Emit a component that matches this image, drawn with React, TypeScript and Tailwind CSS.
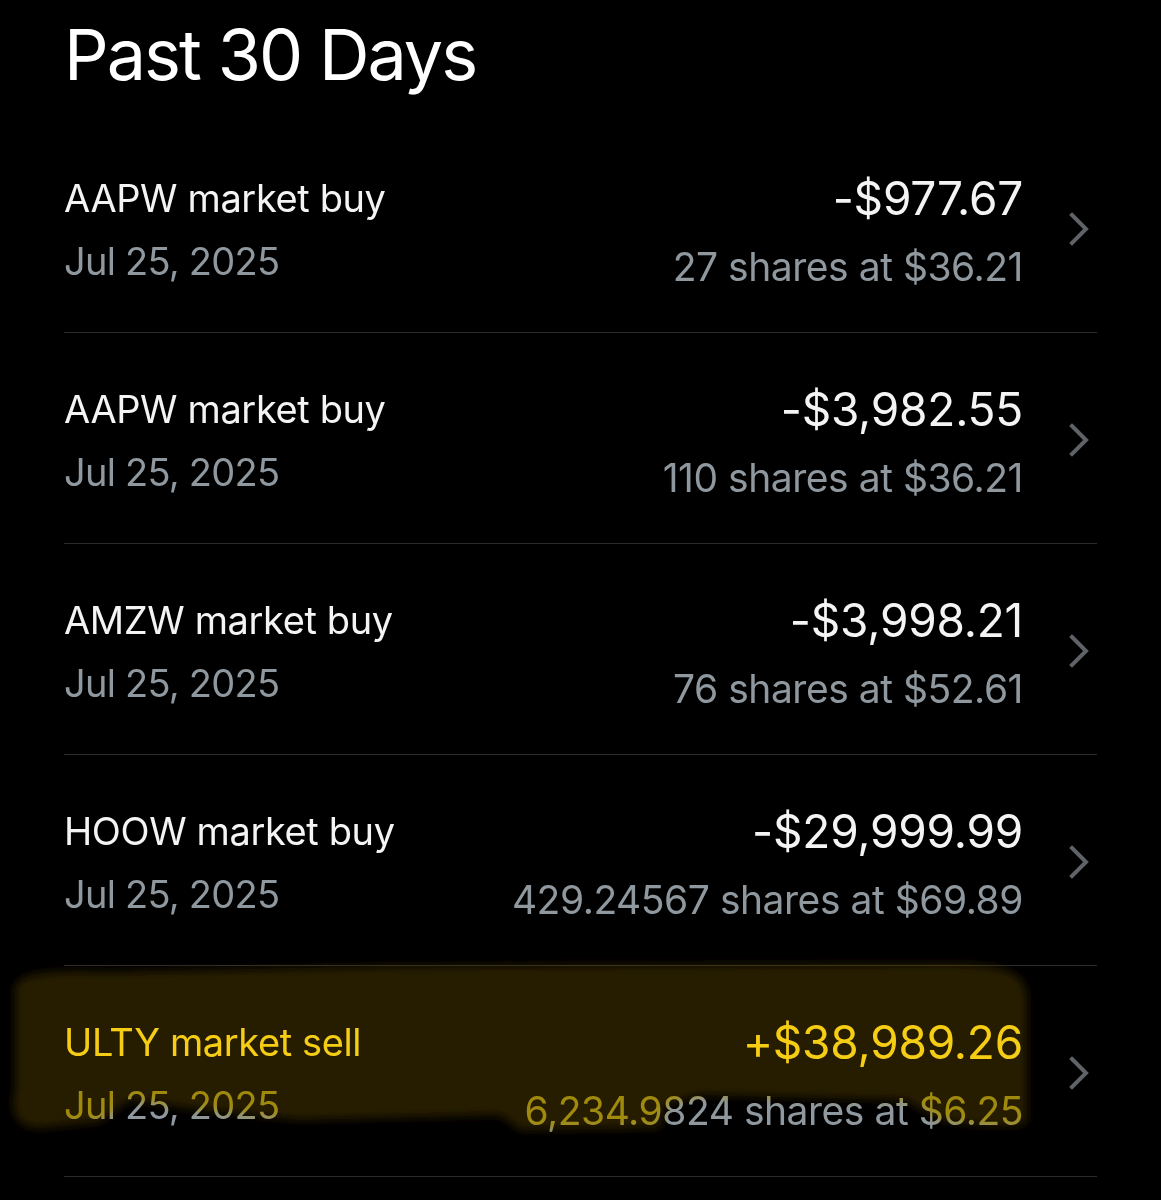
import React from "react";

type Row = {
  name: string;
  date: string;
  amount: string;
  shares: string;
  highlight?: boolean;
};

const rows: Row[] = [
  { name: "AAPW market buy", date: "Jul 25, 2025", amount: "-$977.67", shares: "27 shares at $36.21" },
  { name: "AAPW market buy", date: "Jul 25, 2025", amount: "-$3,982.55", shares: "110 shares at $36.21" },
  { name: "AMZW market buy", date: "Jul 25, 2025", amount: "-$3,998.21", shares: "76 shares at $52.61" },
  { name: "HOOW market buy", date: "Jul 25, 2025", amount: "-$29,999.99", shares: "429.24567 shares at $69.89" },
  { name: "ULTY market sell", date: "Jul 25, 2025", amount: "+$38,989.26", shares: "6,234.9824 shares at $6.25", highlight: true },
];

function Chevron() {
  return (
    <svg width="24" height="34" viewBox="0 0 24 34" className="shrink-0">
      <path d="M5 3 L19 17 L5 31" fill="none" stroke="#5f6367" strokeWidth="4" strokeLinecap="square" strokeLinejoin="miter" />
    </svg>
  );
}

function TxRow({ r }: { r: Row }) {
  return (
    <div className="flex h-[211px] items-center border-b border-[#2b2b2b]">
      <div className="flex flex-1 flex-col pt-[4px]">
        <div className="h-[50px] text-[38px] leading-[50px] tracking-[-0.01em] text-[#f4f4f4]">{r.name}</div>
        <div className="mt-[13px] h-[50px] text-[38px] leading-[50px] tracking-[-0.02em] text-[#8f989e]">{r.date}</div>
      </div>
      <div className="flex flex-col items-end pt-[10px]">
        <div className="h-[50px] text-[46px] leading-[50px] tracking-[-0.005em] text-[#f4f4f4]">{r.amount}</div>
        <div className="mt-[19px] h-[50px] text-[39px] leading-[50px] tracking-[-0.012em] text-[#8f989e]">{r.shares}</div>
      </div>
      <div className="ml-[44px] mr-[6px] flex items-center pt-[4px]">
        <Chevron />
      </div>
    </div>
  );
}

const blobPath =
  "M 15 40 C 15 22, 50 20, 110 22 L 400 16 L 950 14 C 1010 14, 1027 25, 1027 50 L 1027 170 C 1027 178, 990 178, 940 170 L 905 150 L 700 145 L 665 155 L 660 178 L 520 180 L 500 165 L 300 170 L 200 160 L 130 150 L 100 172 L 40 178 C 15 178, 10 160, 15 140 Z";

function Highlight() {
  return (
    <>
      <svg
        className="pointer-events-none absolute left-0 top-[950px] mix-blend-multiply"
        width="1161"
        height="200"
        viewBox="0 0 1161 200"
      >
        <defs>
          <filter id="hlblur1" x="-5%" y="-20%" width="110%" height="140%">
            <feGaussianBlur stdDeviation="5" />
          </filter>
        </defs>
        <path d={blobPath} fill="#ffd014" filter="url(#hlblur1)" />
      </svg>
      <svg
        className="pointer-events-none absolute left-0 top-[950px] mix-blend-screen"
        width="1161"
        height="200"
        viewBox="0 0 1161 200"
      >
        <defs>
          <filter id="hlblur2" x="-5%" y="-20%" width="110%" height="140%">
            <feGaussianBlur stdDeviation="5" />
          </filter>
        </defs>
        <path d={blobPath} fill="#261e00" filter="url(#hlblur2)" />
      </svg>
    </>
  );
}

export default function App() {
  return (
    <div
      className="relative min-h-[1200px] w-[1161px] overflow-hidden bg-black"
      style={{ fontFamily: "Inter, 'Noto Sans', Arial, sans-serif" }}
    >
      <div className="pl-[64px] pr-[64px]">
        <div className="h-[122px] pt-[20px] text-[70px] leading-[70px] tracking-[-0.028em] text-white">Past 30 Days</div>
        {rows.map((r, i) => (
          <TxRow key={i} r={r} />
        ))}
      </div>
      <Highlight />
    </div>
  );
}
